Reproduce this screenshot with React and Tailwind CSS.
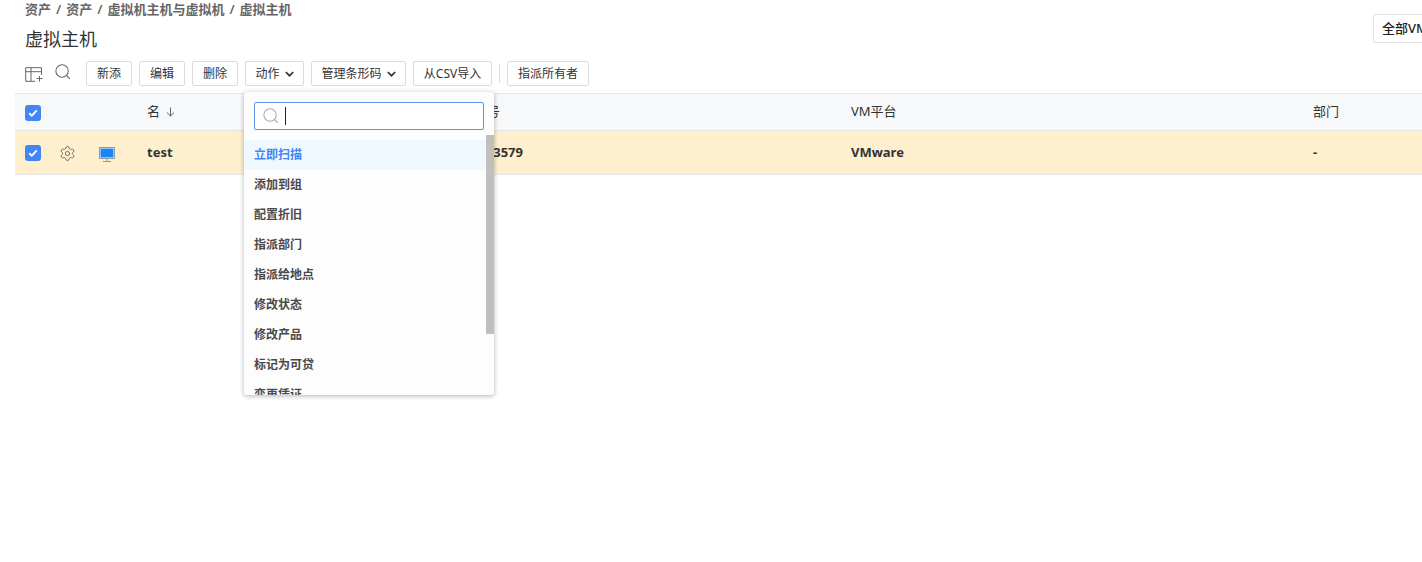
import React from "react";
import { Settings } from "lucide-react";

function Check() {
  return (
    <span className="mt-[1px] flex h-4 w-4 shrink-0 items-center justify-center rounded-[3px] bg-[#4285f4]">
      <svg width="10" height="8" viewBox="0 0 10 8" fill="none">
        <path d="M1.2 4.2 3.8 6.6 8.8 1.4" stroke="#fff" strokeWidth="1.9" />
      </svg>
    </span>
  );
}

function Btn({ children, caret, w }) {
  return (
    <button className={`flex h-[25px] items-center justify-center gap-[5px] rounded-[2px] border border-[#dcdcdc] bg-white text-[12px] leading-none text-[#333] ${w}`}>
      {children}
      {caret && (
        <svg width="9" height="6" viewBox="0 0 9 6" fill="none">
          <path d="M.8 1 4.5 4.7 8.2 1" stroke="#333" strokeWidth="1.7" />
        </svg>
      )}
    </button>
  );
}

function SearchIcon({ size = 16, color = "#666" }) {
  return (
    <svg width={size} height={size} viewBox="0 0 17 17" fill="none">
      <circle cx="7.5" cy="7.5" r="6.6" stroke={color} strokeWidth="1.1" />
      <path d="M12.3 12.3 15.8 15.8" stroke={color} strokeWidth="1.3" />
    </svg>
  );
}

const items = ["添加到组", "配置折旧", "指派部门", "指派给地点", "修改状态", "修改产品", "标记为可贷", "变更凭证"];

export default function App() {
  return (
    <div
      className="relative h-[562px] w-[1422px] overflow-hidden bg-white text-[#333]"
      style={{ fontFamily: '"Noto Sans", "Noto Sans CJK SC", sans-serif' }}
    >
      <div className="flex items-start justify-between pl-[25px]">
        <div className="flex flex-col">
          <div className="flex h-[18px] items-center gap-[5px] text-[13px] font-semibold leading-none text-[#666]">
            <span>资产</span><span>/</span><span>资产</span><span>/</span><span>虚拟机主机与虚拟机</span><span>/</span><span>虚拟主机</span>
          </div>
          <h1 className="mt-[9px] text-[18px] font-normal leading-[25px] text-[#333]">虚拟主机</h1>
        </div>
        <div className="mt-[14px] flex h-[29px] w-[49px] shrink-0 items-center overflow-hidden whitespace-nowrap rounded-l-[3px] border border-r-0 border-[#e4e4e4] pl-[8px] text-[13px] font-medium text-[#222]">
          全部VM
        </div>
      </div>

      <div className="mt-[9px] flex h-[25px] items-center pl-[25px]">
        <svg width="18" height="15" viewBox="0 0 18 15" fill="none" className="mt-[1px]">
          <path d="M16.5 8V.7H.7v13.6H10M.7 4.7h15.8M6 .7v13.6" stroke="#666" strokeWidth="1" />
          <path d="M11.5 11.5h6M14.5 9v5.5" stroke="#666" strokeWidth="1" />
        </svg>
        <span className="ml-[12px] -mt-[3px]"><SearchIcon /></span>
        <div className="ml-[15px] flex items-center gap-[7px]">
          <Btn w="w-[46px]">新添</Btn>
          <Btn w="w-[46px]">编辑</Btn>
          <Btn w="w-[46px]">删除</Btn>
          <Btn w="w-[59px]" caret>动作</Btn>
          <Btn w="w-[95px]" caret>管理条形码</Btn>
          <Btn w="w-[79px]">从CSV导入</Btn>
          <span className="h-[19px] w-px bg-[#dcdcdc]" />
          <Btn w="w-[82px]">指派所有者</Btn>
        </div>
      </div>

      <div className="ml-[15px] mt-[7px] text-[13px]">
        <div className="flex h-[38px] items-center border-y border-[#e6e6e6] bg-[#f6f8fa]">
          <div className="w-[132px] shrink-0 pl-[10px]"><Check /></div>
          <div className="flex w-[314px] shrink-0 items-center gap-[6px]">
            <span>名</span>
            <svg width="9" height="10" viewBox="0 0 9 10" fill="none">
              <path d="M4.5.5v8.5M1 5.6 4.5 9 8 5.6" stroke="#666" strokeWidth="1" />
            </svg>
          </div>
          <div className="w-[390px] shrink-0">序列号</div>
          <div className="w-[462px] shrink-0">VM平台</div>
          <div>部门</div>
        </div>
        <div className="flex h-[44px] items-center border-b border-[#e6e6e6] bg-[#fef0cf] font-bold text-[#333]">
          <div className="flex w-[132px] shrink-0 items-center pl-[10px]">
            <Check />
            <Settings className="ml-[18px] mt-[1px] shrink-0" size={17} color="#666" strokeWidth={1.3} />
            <svg className="ml-[23px] mt-[3px] shrink-0" width="16" height="15" viewBox="0 0 16 15" fill="none">
              <rect x=".5" y=".5" width="15" height="11" fill="#fff" stroke="#8f9aa3" />
              <rect x="1.5" y="1.5" width="13" height="9" fill="#1a86f5" />
              <path d="M8 12v2.5M4 14.5h8" stroke="#8f9aa3" />
            </svg>
          </div>
          <div className="w-[314px] shrink-0">test</div>
          <div className="w-[390px] shrink-0"><span className="block w-[62px] text-right">4503579</span></div>
          <div className="w-[462px] shrink-0">VMware</div>
          <div>-</div>
        </div>
      </div>

      <div className="absolute left-[244px] top-[92px] flex h-[303px] w-[250px] flex-col overflow-hidden rounded-[3px] bg-[#fdfdfd] shadow-[0_1px_5px_rgba(0,0,0,0.3)]">
        <div className="mx-[10px] mt-[10px] flex h-[28px] shrink-0 items-center rounded-[2px] border border-[#5b93ea] bg-white pl-[8px]">
          <SearchIcon size={16} color="#aaa" />
          <span className="ml-[6px] h-[18px] w-px bg-[#222]" />
        </div>
        <div className="mt-[10px] flex-1 overflow-hidden text-[12px] font-semibold text-[#4a4a4a]">
          <div className="flex h-[30px] items-center bg-[#f0f8ff] pl-[10px] text-[#4285f4]">立即扫描</div>
          {items.map((t) => (
            <div key={t} className="flex h-[30px] items-center pl-[10px]">{t}</div>
          ))}
        </div>
        <div className="absolute right-0 top-[43px] h-[199px] w-[8px] bg-[#c1bfbd]" />
      </div>
    </div>
  );
}
